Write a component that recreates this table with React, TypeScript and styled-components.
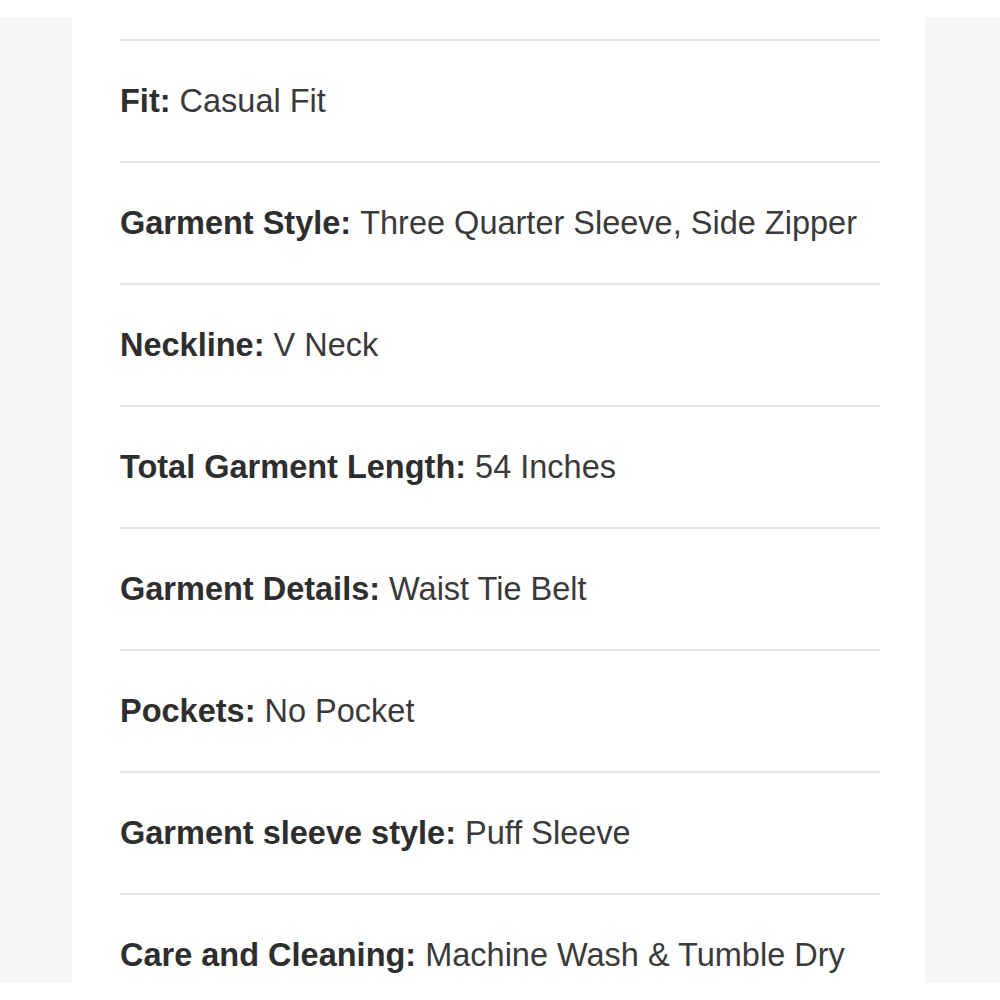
import React from 'react';
import styled, { createGlobalStyle } from 'styled-components';

const GlobalStyle = createGlobalStyle`
  html, body {
    margin: 0;
    padding: 0;
    background: #ffffff;
  }
`;

const Page = styled.div`
  display: flex;
  width: 1000px;
  height: 1000px;
  overflow: hidden;
  background: #ffffff;
`;

const SidePanel = styled.div<{ $width: number }>`
  width: ${p => p.$width}px;
  flex-shrink: 0;
  margin: 17px 0;
  background: #f6f6f6;
`;

const Sheet = styled.div`
  flex: 1;
  padding: 39px 45px 0 48px;
  display: flex;
  flex-direction: column;
`;

const SpecRow = styled.div`
  height: 120px;
  flex-shrink: 0;
  border-top: 2px solid #e4e4e4;
  display: flex;
  align-items: center;
  font-family: "Liberation Sans", Arial, sans-serif;
  font-size: 32.5px;
  color: #3a3a3a;
  white-space: nowrap;
`;

const Label = styled.span`
  font-weight: bold;
  color: #2e2e2e;
  margin-right: 9px;
`;

const specs = [
  ['Fit:', 'Casual Fit'],
  ['Garment Style:', 'Three Quarter Sleeve, Side Zipper'],
  ['Neckline:', 'V Neck'],
  ['Total Garment Length:', '54 Inches'],
  ['Garment Details:', 'Waist Tie Belt'],
  ['Pockets:', 'No Pocket'],
  ['Garment sleeve style:', 'Puff Sleeve'],
  ['Care and Cleaning:', 'Machine Wash & Tumble Dry'],
];

const App: React.FC = () => (
  <>
    <GlobalStyle />
    <Page>
      <SidePanel $width={72} />
      <Sheet>
        {specs.map(([label, value]) => (
          <SpecRow key={label}>
            <Label>{label}</Label>
            {value}
          </SpecRow>
        ))}
      </Sheet>
      <SidePanel $width={75} />
    </Page>
  </>
);

export default App;
